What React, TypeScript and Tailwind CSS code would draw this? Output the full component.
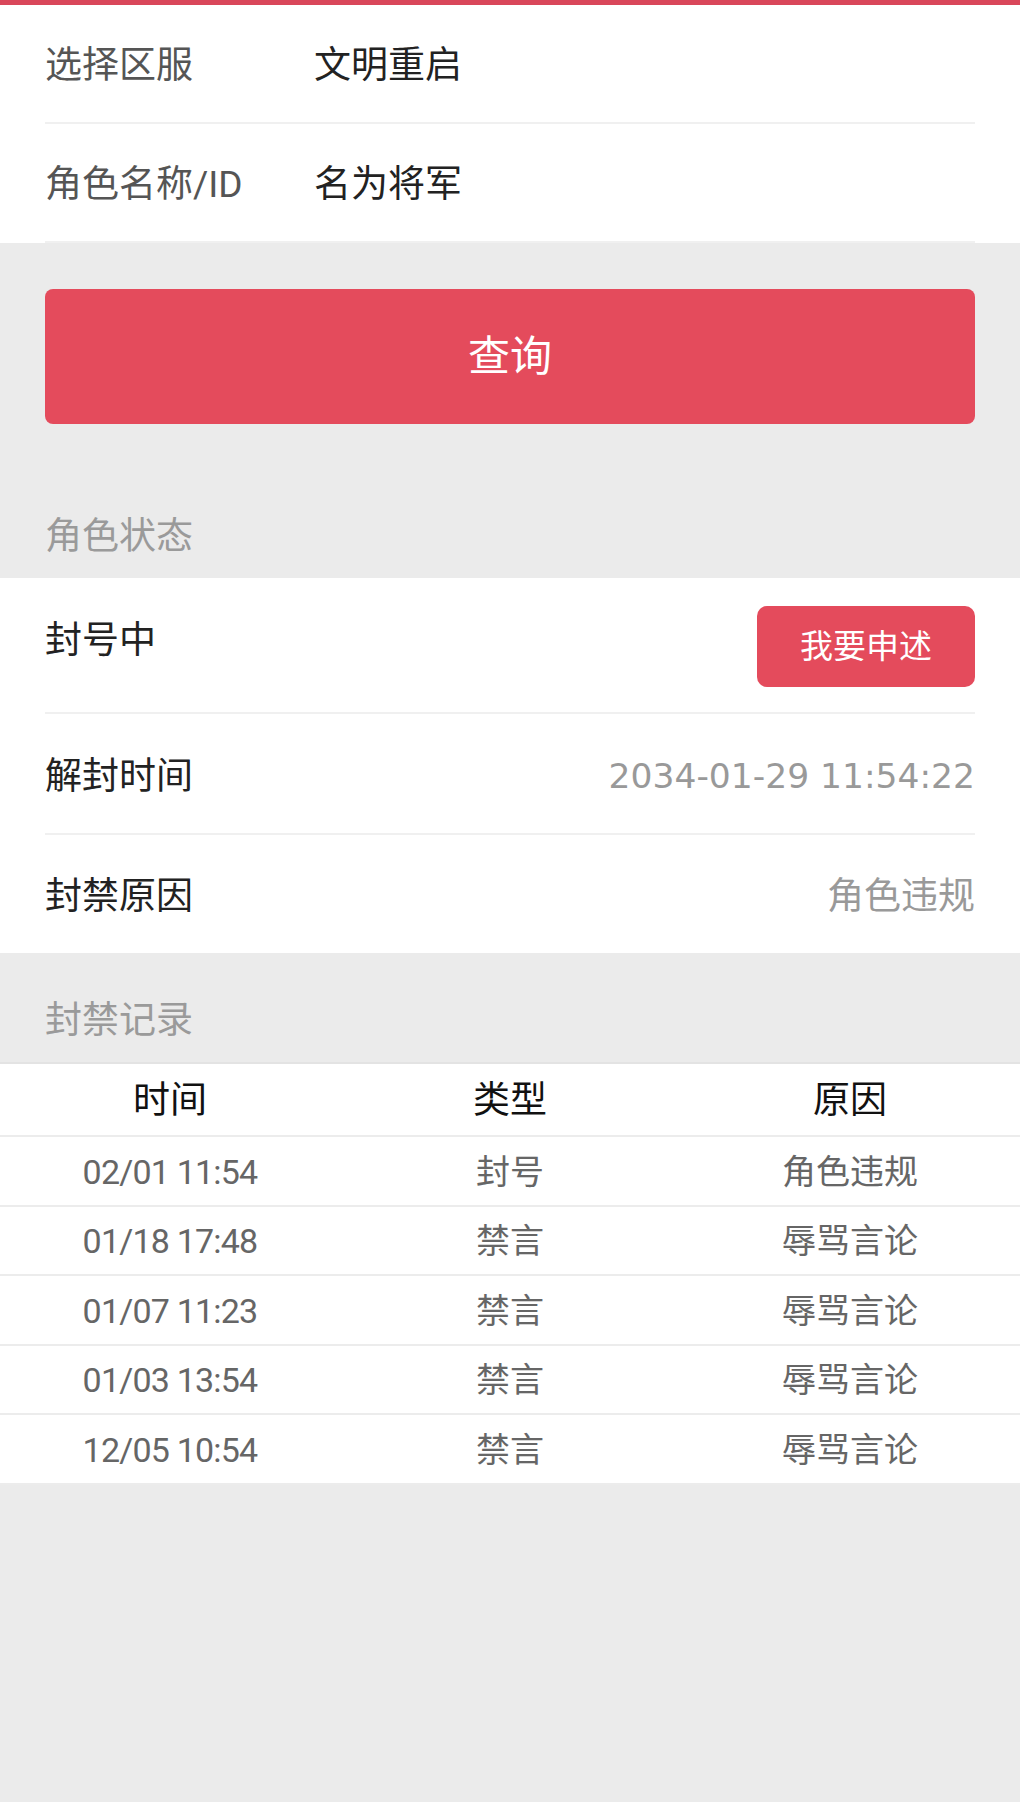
import React from "react";

// Ban record rows shown in the table at the bottom
const RECORDS = [
  { time: "02/01 11:54", type: "封号", reason: "角色违规" },
  { time: "01/18 17:48", type: "禁言", reason: "辱骂言论" },
  { time: "01/07 11:23", type: "禁言", reason: "辱骂言论" },
  { time: "01/03 13:54", type: "禁言", reason: "辱骂言论" },
  { time: "12/05 10:54", type: "禁言", reason: "辱骂言论" },
];

const FONT = "font-['Roboto','Noto_Sans_CJK_SC',sans-serif]";

function FormRow({ label, value }: { label: string; value: string }) {
  return (
    <div className="flex h-[119px] items-center border-b-2 border-[#f0f0f0] pt-[4px]">
      <span className="w-[269px] text-[37px] text-[#555]">{label}</span>
      <span className="text-[37px] text-[#222]">{value}</span>
    </div>
  );
}

function SectionTitle({ children, className }: { children: string; className: string }) {
  return (
    <div className={`flex items-center px-[45px] text-[37px] text-[#9a9a9a] ${className}`}>
      {children}
    </div>
  );
}

export default function App() {
  return (
    <div className={`min-h-[1802px] w-full bg-[#ebebeb] ${FONT}`}>
      <div className="h-[5px] bg-[#d9475a]" />

      {/* Query form */}
      <div className="bg-white px-[45px]">
        <FormRow label="选择区服" value="文明重启" />
        <FormRow label="角色名称/ID" value="名为将军" />
      </div>

      <div className="px-[45px] pt-[46px]">
        <button className="flex h-[135px] w-full items-center justify-center rounded-[8px] bg-[#e44b5c] text-[42px] text-white">
          查询
        </button>
      </div>

      <SectionTitle className="h-[154px] pt-[71px]">角色状态</SectionTitle>

      {/* Role status */}
      <div className="bg-white px-[45px]">
        <div className="flex h-[136px] items-start justify-between border-b-2 border-[#f0f0f0]">
          <span className="mt-[38px] text-[37px] leading-[50px] text-[#222]">封号中</span>
          <button className="mt-[28px] flex h-[81px] w-[218px] items-center justify-center rounded-[10px] bg-[#e44b5c] text-[33px] text-white">
            我要申述
          </button>
        </div>
        <div className="flex h-[121px] items-center justify-between border-b-2 border-[#f0f0f0] pt-[7px]">
          <span className="text-[37px] text-[#222]">解封时间</span>
          <span className="font-['DejaVu_Sans',sans-serif] text-[34.5px] text-[#999]">
            2034-01-29 11:54:22
          </span>
        </div>
        <div className="flex h-[118px] items-center justify-between pt-[5px]">
          <span className="text-[37px] text-[#222]">封禁原因</span>
          <span className="text-[37px] text-[#999]">角色违规</span>
        </div>
      </div>

      <SectionTitle className="h-[109px] pt-[27px]">封禁记录</SectionTitle>

      {/* Ban records */}
      <div className="border-t-2 border-[#e3e3e3] bg-white">
        <div className="grid h-[73px] grid-cols-3 items-center border-b-2 border-[#ececec] pt-[2px] text-center text-[37px] text-[#111]">
          <span>时间</span>
          <span>类型</span>
          <span>原因</span>
        </div>
        {RECORDS.map((r, i) => (
          <div
            key={i}
            className="grid h-[69.5px] grid-cols-3 items-center border-b-2 border-[#ececec] pt-[3px] text-center text-[34px] text-[#666]"
          >
            <span className="tracking-[-0.8px]">{r.time}</span>
            <span>{r.type}</span>
            <span>{r.reason}</span>
          </div>
        ))}
      </div>
    </div>
  );
}
